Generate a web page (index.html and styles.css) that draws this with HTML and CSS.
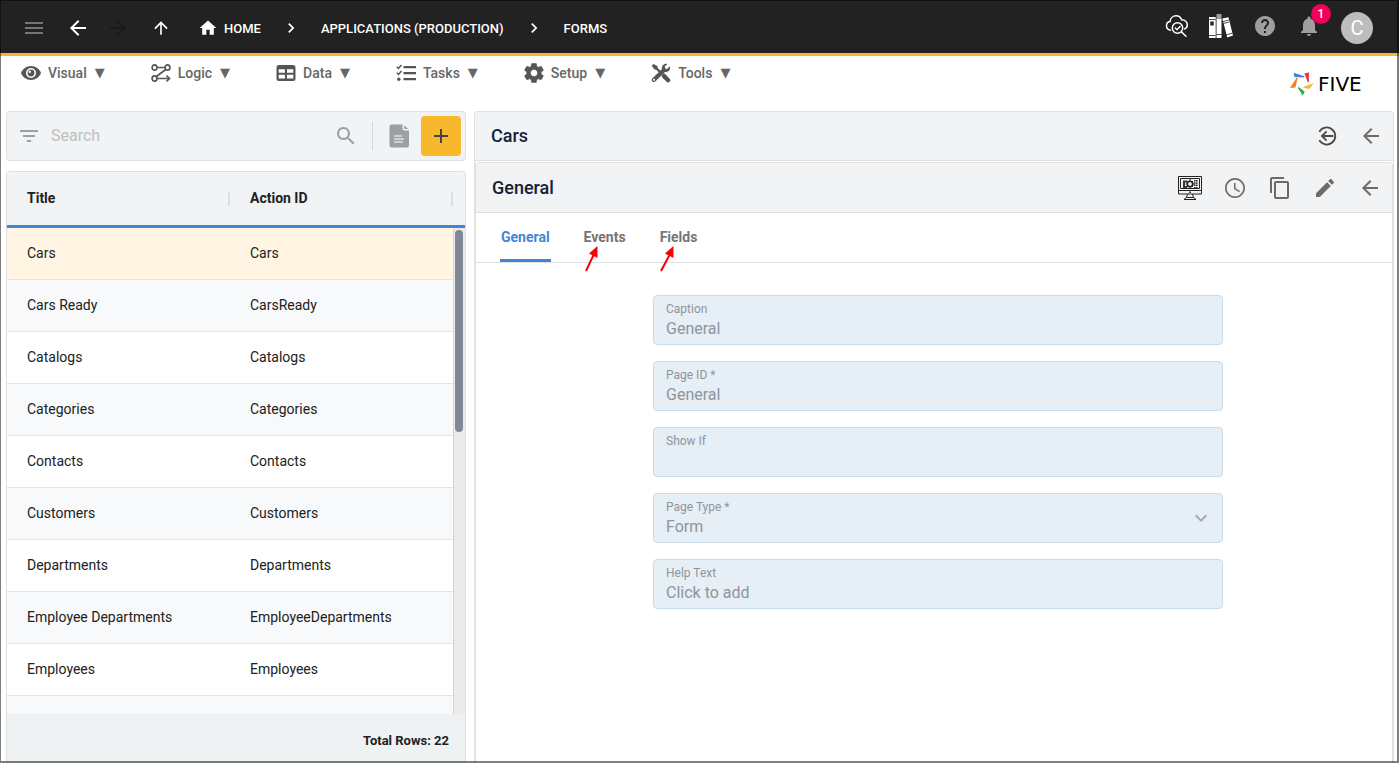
FILE: index.html
```html
<!DOCTYPE html>
<html lang="en">

<head>
    <meta charset="UTF-8">
    <meta name="viewport" content="width=device-width, initial-scale=1.0">
    <title>Five - Forms</title>
    <link rel="stylesheet" href="styles.css">
</head>

<body>
    <header class="topbar">
        <button type="button" class="icon-btn menu-btn" aria-label="Menu">
            <svg viewBox="0 0 24 24"><path d="M3 18h18v-2H3v2zm0-5h18v-2H3v2zm0-7v2h18V6H3z"/></svg>
        </button>
        <button type="button" class="icon-btn back-btn" aria-label="Back">
            <svg viewBox="0 0 24 24"><path d="M20 11H7.830l5.590-5.590L12 4l-8 8 8 8 1.410-1.410L7.830 13H20v-2z"/></svg>
        </button>
        <button type="button" class="icon-btn forward-btn" aria-label="Forward" disabled>
            <svg viewBox="0 0 24 24"><path d="M12 4l-1.410 1.410L16.170 11H4v2h12.170l-5.580 5.590L12 20l8-8z"/></svg>
        </button>
        <button type="button" class="icon-btn up-btn" aria-label="Up">
            <svg viewBox="0 0 24 24"><path d="M4 12l1.410 1.410L11 7.830V20h2V7.830l5.580 5.590L20 12l-8-8-8 8z"/></svg>
        </button>
        <nav class="crumbs">
            <a href="#" class="home">
                <svg viewBox="0 0 24 24"><path d="M10 20v-6h4v6h5v-8h3L12 3 2 12h3v8z"/></svg>
                HOME
            </a>
            <svg class="chevron" viewBox="0 0 24 24"><path d="M10 6L8.590 7.410 13.170 12l-4.580 4.590L10 18l6-6z"/></svg>
            <a href="#">APPLICATIONS (PRODUCTION)</a>
            <svg class="chevron" viewBox="0 0 24 24"><path d="M10 6L8.590 7.410 13.170 12l-4.580 4.590L10 18l6-6z"/></svg>
            <a href="#">FORMS</a>
        </nav>
        <div class="top-actions">
            <button type="button" class="icon-btn cloud-btn" aria-label="Inspect">
                <svg viewBox="0 0 24 24" fill="none" stroke="currentColor" stroke-width="1.500" stroke-linecap="round">
                    <path d="M5.500 16.200C3.200 15.900 1.500 14.200 1.500 11.800c0-2.300 1.500-3.900 3.500-4.200C5.300 4.300 7.900 1.800 11 1.800c2.700 0 4.700 1.500 5.600 3.900 3.300.1 5.700 2.200 5.700 5.100 0 1.900-1 3.500-2.600 4.200"/>
                    <circle cx="12.500" cy="14" r="5.200"/>
                    <path d="M10.300 14l1.700 1.700 3-3.200M16.400 17.900l4.600 4.300"/>
                </svg>
            </button>
            <button type="button" class="icon-btn books-btn" aria-label="Documentation">
                <svg viewBox="0 0 24 24">
                    <path d="M0 3h6.700v21H0zM13.300 4.500l6.200-1.200L24 21.500l-5.700 2z"/>
                    <path d="M7.500 4.500h5V24h-5z"/>
                    <path d="M7.500 0h5v4.500h-5z" fill="#9e9e9e"/>
                    <path d="M0 5.500h6.700M0 21.500h6.700M7.500 20.500h5M13.800 7.500l6-1.300M17.500 20.800l6-1.700M14.300 9.500l5.800-1.400" stroke="#222" stroke-width=".8" fill="none"/>
                    <path d="M1.300 7.500h3.400v4H1.300z" fill="#222"/>
                </svg>
            </button>
            <button type="button" class="icon-btn help-btn" aria-label="Help">
                <svg viewBox="0 0 24 24"><path d="M12 2C6.480 2 2 6.480 2 12s4.480 10 10 10 10-4.480 10-10S17.520 2 12 2zm1 17h-2v-2h2v2zm2.070-7.750l-.9.920C13.450 12.900 13 13.500 13 15h-2v-.5c0-1.100.45-2.100 1.170-2.830l1.240-1.260c.37-.36.59-.86.59-1.410 0-1.100-.9-2-2-2s-2 .9-2 2H8c0-2.210 1.790-4 4-4s4 1.790 4 4c0 .88-.36 1.680-.93 2.250z"/></svg>
            </button>
            <button type="button" class="icon-btn bell-btn" aria-label="Notifications">
                <svg viewBox="0 0 24 24"><path d="M12 22c1.100 0 2-.9 2-2h-4c0 1.100.89 2 2 2zm6-6v-5c0-3.070-1.640-5.640-4.500-6.320V4c0-.83-.67-1.500-1.500-1.500s-1.500.67-1.500 1.500v.68C7.630 5.360 6 7.920 6 11v5l-2 2v1h16v-1l-2-2z"/></svg>
                <span class="badge">1</span>
            </button>
            <button type="button" class="avatar">C</button>
        </div>
    </header>

    <div class="menubar">
        <nav class="menus">
            <button type="button" class="menu">
                <svg viewBox="0 0 20 20"><path d="M10 3C5.300 3 1.500 6 0 10c1.500 4 5.300 7 10 7s8.500-3 10-7c-1.500-4-5.300-7-10-7z"/><circle cx="10" cy="10" r="5" fill="#fff"/><circle cx="10" cy="10" r="3.400"/><circle cx="8.800" cy="8.800" r="1.200" fill="#fff"/></svg>
                Visual <span class="caret">▼</span>
            </button>
            <button type="button" class="menu">
                <svg viewBox="0 0 20 20" fill="none" stroke="currentColor" stroke-width="1.700">
                    <ellipse cx="3.500" cy="4.500" rx="2.400" ry="2.700"/><ellipse cx="16.500" cy="4.500" rx="2.400" ry="2.700"/><ellipse cx="3.500" cy="15.500" rx="2.400" ry="2.700"/>
                    <path d="M6 4.500h8M14.800 6.500L5.300 13.500M6 15.500h12M15.500 12.500l3 3-3 3"/>
                </svg>
                Logic <span class="caret">▼</span>
            </button>
            <button type="button" class="menu">
                <svg viewBox="0 0 20 20"><path fill-rule="evenodd" d="M3 2h14a2.500 2.500 0 0 1 2.500 2.500v11A2.500 2.500 0 0 1 17 18H3a2.500 2.500 0 0 1-2.500-2.500v-11A2.500 2.500 0 0 1 3 2zM2.700 6.300v3.500h6.200V6.300zM11 6.300v3.500h6.300V6.300zM2.700 11.800v3.700h6.200v-3.700zM11 11.800v3.700h6.300v-3.700z"/></svg>
                Data <span class="caret">▼</span>
            </button>
            <button type="button" class="menu">
                <svg viewBox="0 0 20 20"><path d="M7.500 3H20v2.200H7.500zM7.500 9H20v2.200H7.500zM7.500 15H20v2.200H7.500z"/><path d="M.8 3.800l1.700 1.700 3-3.500M.8 9.800l1.700 1.700 3-3.500" fill="none" stroke="currentColor" stroke-width="1.500"/><circle cx="2.800" cy="16.200" r="1.700"/></svg>
                Tasks <span class="caret">▼</span>
            </button>
            <button type="button" class="menu">
                <svg viewBox="2 2 20 20"><path d="M19.140 12.940c.04-.3.060-.61.060-.94 0-.32-.02-.64-.07-.94l2.030-1.580c.18-.14.23-.41.12-.61l-1.920-3.320c-.12-.22-.37-.29-.59-.22l-2.390.96c-.5-.38-1.030-.7-1.620-.94l-.36-2.540c-.04-.24-.24-.41-.48-.41h-3.840c-.24 0-.43.17-.47.41l-.36 2.540c-.59.24-1.130.57-1.620.94l-2.390-.96c-.22-.08-.47 0-.59.220L2.740 8.870c-.12.21-.08.47.12.61l2.030 1.580c-.05.3-.09.63-.09.94s.02.64.07.94l-2.030 1.580c-.18.14-.23.41-.12.61l1.920 3.320c.12.22.37.29.59.22l2.390-.96c.5.38 1.030.7 1.620.94l.36 2.540c.05.24.24.41.48.41h3.840c.24 0 .44-.17.47-.41l.36-2.540c.59-.24 1.130-.56 1.620-.94l2.390.96c.22.08.47 0 .59-.22l1.920-3.320c.12-.22.07-.47-.12-.61l-2.010-1.580zM12 15.600c-1.980 0-3.600-1.620-3.600-3.600s1.620-3.600 3.600-3.600 3.600 1.620 3.600 3.600-1.620 3.600-3.600 3.600z" stroke="currentColor" stroke-width=".6"/></svg>
                Setup <span class="caret">▼</span>
            </button>
            <button type="button" class="menu">
                <svg viewBox="0 0 20 20"><path d="M2.500 1L.8 2.800l2.400 3.500 2 .5L9 10.500l1.600-1.600L6.800 5.100l-.5-2zM12.600 10.300l-2 2 .4 1.900 4.600 4.600c1 1 2.300.8 3-.1.900-.8 1-2 .1-3l-4.600-4.600z"/><path d="M18.800 3.300l-2.700 2.600-1.900-.4-.4-1.900L16.500 1c-3.400-.9-6.200 1.700-5.500 5L1.500 15.300c-1 1-.9 2.200-.1 3.100.9.800 2.200.9 3.100-.1L14 8.900c3.300.7 6-2.200 4.800-5.600z"/><circle cx="3" cy="16.800" r="1" fill="#fff"/></svg>
                Tools <span class="caret">▼</span>
            </button>
        </nav>
        <a href="#" class="logo">
            <svg viewBox="0 0 24 24">
                <path d="M3.700.8L14.300 4.300v1.200L4.300 5z" fill="#4285d6"/>
                <path d="M14.300 1.500L18.900.2l.1 10-1.300-.2z" fill="#e53e3e"/>
                <path d="M24 11.300L19.300 17l-6-1.200.3-1z" fill="#f7b82b"/>
                <path d="M8.200 14.800l6.500 4.600-2 4.400-4.500-7.500z" fill="#34a853"/>
                <path d="M6.700 5.500l1 .4L5.300 15.600l-5.300.4z" fill="#f5802a"/>
            </svg>
            FIVE
        </a>
    </div>

    <main class="main">
        <section class="list">
            <div class="search">
                <button type="button" class="icon-btn" aria-label="Filter">
                    <svg viewBox="0 0 24 24"><path d="M10 18h4v-2h-4v2zM3 6v2h18V6H3zm3 7h12v-2H6v2z"/></svg>
                </button>
                <input type="text" placeholder="Search" aria-label="Search">
                <button type="button" class="icon-btn" aria-label="Search">
                    <svg viewBox="0 0 24 24"><path d="M15.500 14h-.79l-.28-.27C15.410 12.590 16 11.110 16 9.500 16 5.910 13.090 3 9.500 3S3 5.910 3 9.500 5.910 16 9.500 16c1.610 0 3.090-.59 4.230-1.570l.27.28v.79l5 4.990L20.490 19l-4.990-5zm-6 0C7.010 14 5 11.990 5 9.500S7.010 5 9.500 5 14 7.010 14 9.500 11.990 14 9.500 14z"/></svg>
                </button>
                <span class="divider"></span>
                <button type="button" class="icon-btn doc-btn" aria-label="Report">
                    <svg viewBox="0 0 24 24"><path d="M4.500.5h11v4a2 2 0 0 0 2 2H22v15a2 2 0 0 1-2 2H4.500a2 2 0 0 1-2-2v-19a2 2 0 0 1 2-2z"/><path d="M17.200 1.200V5h4z"/><path d="M7 12h8M7 15h10M7 18h9" stroke="#fff" stroke-width="1.200"/></svg>
                </button>
                <button type="button" class="add-btn" aria-label="Add">
                    <svg viewBox="0 0 24 24"><path d="M19 13h-6v6h-2v-6H5v-2h6V5h2v6h6v2z"/></svg>
                </button>
            </div>

            <div class="grid">
                <div class="grid-body">
                    <table>
                        <thead>
                            <tr>
                                <th>Title</th>
                                <th>Action ID</th>
                                <td class="gutter"></td>
                            </tr>
                        </thead>
                        <tbody>
                            <tr class="selected"><td>Cars</td><td>Cars</td></tr>
                            <tr><td>Cars Ready</td><td>CarsReady</td></tr>
                            <tr><td>Catalogs</td><td>Catalogs</td></tr>
                            <tr><td>Categories</td><td>Categories</td></tr>
                            <tr><td>Contacts</td><td>Contacts</td></tr>
                            <tr><td>Customers</td><td>Customers</td></tr>
                            <tr><td>Departments</td><td>Departments</td></tr>
                            <tr><td>Employee Departments</td><td>EmployeeDepartments</td></tr>
                            <tr><td>Employees</td><td>Employees</td></tr>
                            <tr><td></td><td></td></tr>
                        </tbody>
                    </table>
                    <div class="scrollbar"><div class="thumb"></div></div>
                </div>
                <div class="grid-footer">Total Rows: 22</div>
            </div>
        </section>

        <section class="detail">
            <div class="bar">
                <h1>Cars</h1>
                <div class="bar-actions">
                    <button type="button" class="icon-btn close-btn" aria-label="Close">
                        <svg viewBox="0 0 24 24" fill="none" stroke="currentColor" stroke-width="2">
                            <path d="M3.600 7.500a9.300 9.300 0 1 1 0 9M19 12H7M11.500 7L6.500 12l5 5"/>
                        </svg>
                    </button>
                    <button type="button" class="icon-btn" aria-label="Back">
                        <svg viewBox="0 0 24 24"><path d="M20 11H7.830l5.590-5.590L12 4l-8 8 8 8 1.410-1.410L7.830 13H20v-2z"/></svg>
                    </button>
                </div>
            </div>

            <div class="page">
                <div class="bar">
                    <h2>General</h2>
                    <div class="bar-actions">
                        <button type="button" class="icon-btn monitor-btn" aria-label="Preview">
                            <svg viewBox="0 0 24 24" fill="none" stroke="currentColor" stroke-width="1">
                                <path d="M.5.500h23v17.500H.5zM.5 14.500h23M2.500 2.500h19v10h-19zM9.500 18l-1 3.500h7l-1-3.500M6 23.500h12M8.500 21.500L6 23.500M15.500 21.500l2.500 2"/>
                                <circle cx="12" cy="8" r="2.700" stroke-width="1.600"/>
                                <path d="M12 3v2M12 10.500v2M7.700 8h1.500M14.800 8h1.500M9 5l1.200 1.200M15 5l-1.200 1.200M9 11l1.200-1.200M15 11l-1.200-1.200"/>
                                <path d="M6 4.500V12M8 4.500v2M8 10v2" stroke-width="1.800"/>
                                <path d="M18.800 4v8.500M16.800 4v8.500" stroke-width="1.500" stroke-dasharray="1.500 .8"/>
                                <circle cx="12" cy="16.300" r=".6"/>
                            </svg>
                        </button>
                        <button type="button" class="icon-btn" aria-label="History">
                            <svg viewBox="0 0 24 24"><path d="M11.990 2C6.470 2 2 6.480 2 12s4.470 10 9.990 10C17.520 22 22 17.520 22 12S17.520 2 11.990 2zM12 20.300c-4.600 0-8.300-3.700-8.300-8.300S7.400 3.700 12 3.700s8.300 3.700 8.300 8.300-3.700 8.300-8.300 8.300zM12.500 7H11v6l5.250 3.150.75-1.230-4.500-2.670z"/></svg>
                        </button>
                        <button type="button" class="icon-btn" aria-label="Copy">
                            <svg viewBox="0 0 24 24"><path d="M16 1H4c-1.100 0-2 .9-2 2v14h2V3h12V1zm3 4H8c-1.100 0-2 .9-2 2v14c0 1.100.9 2 2 2h11c1.100 0 2-.9 2-2V7c0-1.100-.9-2-2-2zm0 16H8V7h11v14z"/></svg>
                        </button>
                        <button type="button" class="icon-btn" aria-label="Edit">
                            <svg viewBox="0 0 24 24"><path d="M3 17.250V21h3.750L17.810 9.940l-3.750-3.750L3 17.250zM20.710 7.040c.39-.39.39-1.020 0-1.410l-2.340-2.340c-.39-.39-1.020-.39-1.410 0l-1.830 1.830 3.750 3.750 1.830-1.830z"/></svg>
                        </button>
                        <button type="button" class="icon-btn" aria-label="Back">
                            <svg viewBox="0 0 24 24"><path d="M20 11H7.830l5.590-5.590L12 4l-8 8 8 8 1.410-1.410L7.830 13H20v-2z"/></svg>
                        </button>
                    </div>
                </div>

                <div class="tabs">
                    <button type="button" class="tab active">General</button>
                    <button type="button" class="tab">Events
                        <svg class="pointer" viewBox="0 0 16 28"><path d="M3 26L11 9" stroke="#f00" stroke-width="2"/><path d="M14.500 1v12L6 8.500z" fill="#f00"/></svg>
                    </button>
                    <button type="button" class="tab">Fields
                        <svg class="pointer" viewBox="0 0 16 28"><path d="M2 26L11 9" stroke="#f00" stroke-width="2"/><path d="M14.500 1v12L6 8.500z" fill="#f00"/></svg>
                    </button>
                </div>

                <form class="form">
                    <div class="field">
                        <label for="caption">Caption</label>
                        <input type="text" id="caption" value="General" disabled>
                    </div>
                    <div class="field">
                        <label for="page-id">Page ID *</label>
                        <input type="text" id="page-id" value="General" disabled>
                    </div>
                    <div class="field">
                        <label for="show-if">Show If</label>
                        <input type="text" id="show-if" disabled>
                    </div>
                    <div class="field">
                        <label for="page-type">Page Type *</label>
                        <select id="page-type" disabled>
                            <option>Form</option>
                        </select>
                        <svg class="arrow-down" viewBox="0 0 24 24"><path d="M16.590 8.590L12 13.170 7.410 8.590 6 10l6 6 6-6z"/></svg>
                    </div>
                    <div class="field">
                        <label for="help-text">Help Text</label>
                        <input type="text" id="help-text" value="Click to add" disabled>
                    </div>
                </form>
            </div>
        </section>
    </main>
</body>

</html>
```

FILE: styles.css
```css
* {
    box-sizing: border-box;
}

body {
    margin: 0;
    height: 100vh;
    display: flex;
    flex-direction: column;
    overflow: hidden;
    background-color: #fff;
    font-family: Roboto, "Liberation Sans", sans-serif;
    font-size: 14px;
    color: #212121;
}

/* window frame */
body::after {
    content: "";
    position: fixed;
    inset: 0;
    border: solid rgba(0, 0, 0, 0.5);
    border-width: 1px 2px 2px 1px;
    pointer-events: none;
}

button {
    border: none;
    background: none;
    padding: 0;
    font: inherit;
    color: inherit;
    cursor: pointer;
}

a {
    color: inherit;
    text-decoration: none;
}

svg {
    display: block;
    fill: currentColor;
}

svg[fill="none"] {
    fill: none;
}

.icon-btn svg {
    width: 24px;
    height: 24px;
}

/* top bar */
.topbar {
    height: 56px;
    flex-shrink: 0;
    display: flex;
    align-items: center;
    padding: 3px 26px 0 22px;
    background-color: #222;
    border-bottom: 3px solid #f7b82b;
    color: #fff;
}

.menu-btn {
    color: #757575;
    margin-right: 20px;
}

.back-btn {
    margin-right: 16px;
}

.forward-btn {
    color: #1a1a1a;
    margin-right: 21px;
}

.up-btn {
    margin-right: 27px;
}

.up-btn svg,
.home svg,
.chevron {
    width: 20px;
    height: 20px;
}

.crumbs {
    display: flex;
    align-items: center;
    gap: 20px;
    font-size: 13px;
    font-weight: 500;
}

.crumbs .home {
    display: flex;
    align-items: center;
    gap: 6px;
}

.top-actions {
    display: flex;
    align-items: center;
    gap: 20px;
    margin-left: auto;
}

.top-actions .icon-btn {
    margin-bottom: 4px;
}

.help-btn,
.bell-btn {
    color: #9e9e9e;
}

.bell-btn {
    position: relative;
}

.badge {
    position: absolute;
    top: -10px;
    right: -10px;
    width: 20px;
    height: 20px;
    border-radius: 50%;
    background-color: #f50057;
    color: #fff;
    font-size: 12px;
    font-weight: 500;
    line-height: 20px;
    text-align: center;
}

.avatar {
    width: 32px;
    height: 32px;
    border-radius: 50%;
    background-color: #bdbdbd;
    color: #fff;
    font-size: 20px;
}

/* menu bar */
.menubar {
    height: 55px;
    flex-shrink: 0;
    display: flex;
    justify-content: space-between;
    padding: 6px 21px;
}

.menus {
    display: flex;
    align-items: flex-start;
    gap: 46px;
}

.menu {
    display: flex;
    align-items: center;
    height: 21px;
    font-weight: 500;
    line-height: 18px;
    color: #666;
}

.menu svg {
    width: 20px;
    height: 20px;
    margin-right: 7px;
    color: #555;
}

.caret {
    margin-left: 8px;
    font-family: "DejaVu Sans", sans-serif;
    font-size: 13px;
}

.logo {
    display: flex;
    align-items: center;
    gap: 4px;
    min-width: 88px;
    height: 44px;
    font-family: "DejaVu Sans", sans-serif;
    font-size: 20px;
    line-height: 20px;
    color: #000;
}

.logo svg {
    width: 24px;
    height: 24px;
}

/* layout */
.main {
    flex: 1;
    min-height: 0;
    display: grid;
    grid-template-columns: 1fr 2fr;
    gap: 8px;
    padding: 0 5px 0 6px;
}

.list {
    min-width: 0;
    min-height: 0;
    display: flex;
    flex-direction: column;
    gap: 10px;
}

.search {
    height: 50px;
    flex-shrink: 0;
    display: flex;
    align-items: center;
    padding: 0 4px 0 10px;
    border: 1px solid #e0e0e0;
    border-radius: 4px;
    background-color: #f1f3f5;
    color: #9aa0a6;
}

.search input {
    flex: 1;
    min-width: 0;
    padding: 0 10px 2px;
    border: none;
    outline: none;
    background: none;
    font: inherit;
    font-size: 16px;
}

.search input::placeholder {
    color: #bcbfc3;
}

.divider {
    width: 1px;
    height: 28px;
    margin: 0 14px;
    background-color: #d5d8db;
}

.doc-btn {
    margin-right: 10px;
}

.add-btn {
    width: 40px;
    height: 40px;
    display: flex;
    align-items: center;
    justify-content: center;
    border-radius: 4px;
    background-color: #f7b82b;
    color: #444;
}

.add-btn svg {
    width: 24px;
    height: 24px;
}

/* record list */
.grid {
    flex: 1;
    min-height: 0;
    display: flex;
    flex-direction: column;
    border: 1px solid #e0e0e0;
    border-bottom: none;
    border-radius: 4px 4px 0 0;
    overflow: hidden;
}

.grid-body {
    flex: 1;
    min-height: 0;
    position: relative;
    overflow: hidden;
}

table {
    width: 100%;
    table-layout: fixed;
    border-spacing: 0;
}

thead th,
thead td {
    height: 56px;
    padding: 0 0 2px 20px;
    background-color: #f1f3f5;
    border-bottom: 3px solid #4285d6;
    text-align: left;
    font-weight: 700;
}

thead th {
    background-image: linear-gradient(#dcdfe2, #dcdfe2);
    background-size: 2px 14px;
    background-position: right center;
    background-repeat: no-repeat;
}

thead .gutter {
    width: 12px;
    padding: 0;
}

tbody td {
    height: 52px;
    padding: 0 0 2px 20px;
    border-bottom: 1px solid #e2e4e6;
}

tbody tr:nth-child(even) {
    background-color: #f8f9fb;
}

tbody tr.selected {
    background-color: #fff5e2;
}

.scrollbar {
    position: absolute;
    top: 56px;
    right: 0;
    bottom: 0;
    width: 12px;
    padding: 2px 2px 2px 1px;
    border-left: 1px solid #d5d5d5;
    background-color: #ebebeb;
}

.thumb {
    height: 42%;
    border-radius: 4px;
    background-color: #808796;
}

.grid-footer {
    padding: 19px 16px 14px;
    background-color: #eef2f3;
    font-size: 13px;
    font-weight: 700;
    line-height: 16px;
    text-align: right;
}

/* record detail */
.detail {
    min-width: 0;
    display: flex;
    flex-direction: column;
    border: 1px solid #e0e0e0;
    border-bottom: none;
    border-radius: 4px 4px 0 0;
}

.bar {
    height: 49px;
    flex-shrink: 0;
    display: flex;
    align-items: center;
    justify-content: space-between;
    padding: 0 10px 0 16px;
    border-bottom: 1px solid #e0e0e0;
    border-radius: 4px 4px 0 0;
    background-color: #f1f3f5;
}

h1,
h2 {
    margin: 0;
    font-size: 18px;
    font-weight: 500;
    color: #14213a;
}

h1 {
    padding-bottom: 2px;
}

.bar-actions {
    display: flex;
    align-items: center;
    gap: 21px;
    color: #6b6b6b;
}

.close-btn {
    color: #4a4a4a;
}

.close-btn svg {
    width: 22px;
    height: 22px;
}

.monitor-btn {
    color: #222;
}

.page {
    flex: 1;
    display: flex;
    flex-direction: column;
    margin-top: 1px;
    border: 1px solid #e0e0e0;
    border-bottom: none;
    border-radius: 4px 4px 0 0;
}

.page .bar {
    height: 50px;
}

.tabs {
    height: 50px;
    display: flex;
    gap: 32px;
    padding: 0 24px;
    border-bottom: 1px solid #e0e0e0;
}

.tab {
    position: relative;
    height: 49px;
    padding: 0 1px 2px;
    border-bottom: 3px solid transparent;
    border-top: 3px solid transparent;
    font-weight: 700;
    color: #757575;
}

.tab.active {
    color: #4285d6;
    border-bottom-color: #4285d6;
}

.pointer {
    position: absolute;
    top: 29px;
    left: 0;
    width: 16px;
    height: 28px;
}

.form {
    display: flex;
    flex-direction: column;
    gap: 16px;
    width: 100%;
    max-width: 642px;
    margin: 0 auto;
    padding: 32px 32px 32px 40px;
}

.field {
    position: relative;
    height: 50px;
    display: flex;
    flex-direction: column;
    padding: 5px 12px;
    border: 1px solid #c9dcec;
    border-radius: 4px;
    background-color: #e6eef6;
    color: #8f959c;
}

.field label {
    font-size: 12px;
    line-height: 16px;
}

.field input,
.field select {
    width: 100%;
    height: 22px;
    padding: 0;
    border: none;
    outline: none;
    background: none;
    appearance: none;
    font: inherit;
    font-size: 16px;
    color: inherit;
    opacity: 1;
}

.arrow-down {
    position: absolute;
    top: 12px;
    right: 9px;
    width: 24px;
    height: 24px;
    color: #a3abb3;
}
```
